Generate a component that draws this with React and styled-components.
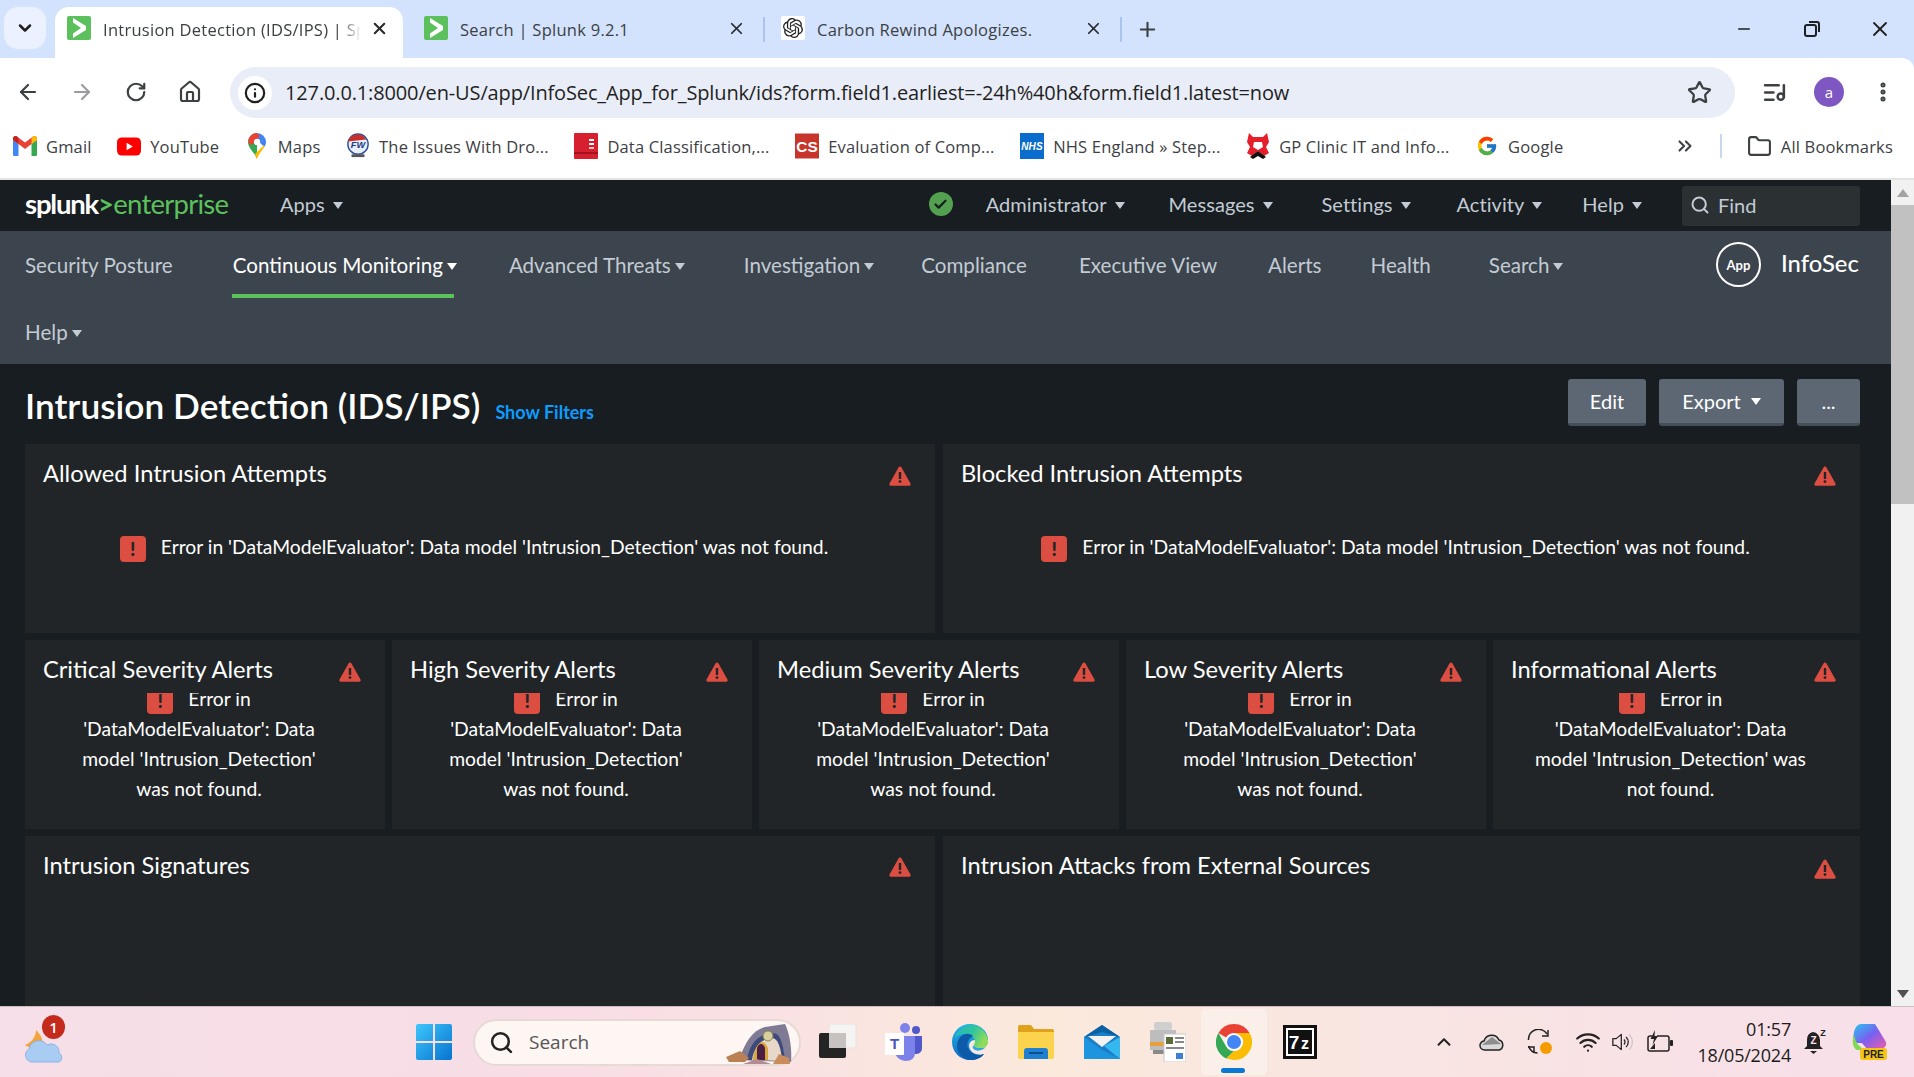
import React from 'react';
import styled, { createGlobalStyle } from 'styled-components';
import { ArrowLeft, ArrowRight, RotateCw, Home, Star, X, Plus, Minus, ChevronDown, ChevronsRight, Folder, MoreVertical, ListMusic, Search, ChevronUp, Wifi, Info, Check } from 'lucide-react';
import { SiOpenai } from 'react-icons/si';
import { FcGoogle } from 'react-icons/fc';

const Global = createGlobalStyle`
  html, body { margin: 0; padding: 0; height: 100%; background: #d3e3fd; overflow: hidden; }
  * { box-sizing: border-box; }
`;

const UI = `"Open Sans", "Noto Sans", sans-serif`;
const SP = `Lato, "Open Sans", sans-serif`;

const Page = styled.div`
  width: 1914px; height: 1077px; display: flex; flex-direction: column; overflow: hidden; background: #d3e3fd;
`;

/* ---------- browser chrome ---------- */
const TabStrip = styled.div`
  height: 58px; flex: none; background: #d3e3fd; display: flex; align-items: flex-start; padding: 7px 0 0 4px; font-family: ${UI};
`;
const TabSearch = styled.div`
  width: 42px; height: 42px; border-radius: 14px; background: #ebf1fe; display: flex; align-items: center; justify-content: center; margin-right: 9px; color: #1f1f1f;
`;
const Tab = styled.div`
  position: relative; width: 348px; height: 51px; margin-right: 9px; padding: 9px 12px 0 12px; display: flex; align-items: flex-start;
  border-radius: 14px 14px 0 0; background: ${p => (p.$active ? '#fff' : 'transparent')};
  ${p => p.$sep && `&::after { content: ''; position: absolute; right: -5px; top: 10px; width: 2px; height: 25px; background: #a9c4ef; }`}
`;
const Favicon = styled.span`
  width: 24px; height: 24px; flex: none; display: flex; align-items: center; justify-content: center; background: ${p => p.$bg}; border-radius: 2px;
`;
const TabTitle = styled.span`
  flex: 1; margin-left: 12px; font-size: 16.5px; line-height: 28px; color: #3c4043; white-space: nowrap; overflow: hidden; letter-spacing: 0.27px;
  ${p => p.$fade && `-webkit-mask-image: linear-gradient(90deg, #000 92%, transparent 100%);`}
`;
const TabClose = styled.span`
  width: 24px; height: 24px; flex: none; display: flex; align-items: center; justify-content: center; color: #26282b; margin-left: 6px;
`;
const NewTab = styled.span`
  width: 28px; height: 28px; margin: 8px 0 0 7px; display: flex; color: #3c4043; align-items: center; justify-content: center;
`;
const WinControls = styled.div`
  margin-left: auto; display: flex; padding-top: 1px; color: #1f1f1f;
`;
const WinBtn = styled.span`
  width: 68px; height: 42px; display: flex; align-items: center; justify-content: center;
`;
const Toolbar = styled.div`
  height: 60px; flex: none; background: #fff; display: flex; align-items: flex-start; padding: 9px 0 0 1px; font-family: ${UI}; border-radius: 0 12px 0 0;
`;
const NavIcon = styled.span`
  width: 54px; height: 50px; flex: none; display: flex; align-items: center; justify-content: center; color: ${p => p.$c || '#3c4043'};
`;
const Omnibox = styled.div`
  width: 1505px; height: 51px; margin-left: 13px; background: #e9edf7; border-radius: 26px; display: flex; align-items: center; padding: 0 23px 0 8px;
`;
const InfoPill = styled.span`
  width: 34px; height: 34px; border-radius: 50%; background: #fff; display: flex; align-items: center; justify-content: center; color: #1f1f1f;
`;
const Url = styled.span`
  margin-left: 13px; flex: 1; font-size: 20px; color: #1f1f1f; white-space: nowrap; letter-spacing: -0.14px;
`;
const Right = styled.div`
  display: flex; align-items: center; height: 50px; margin-left: 27px; color: #3c4043; gap: 27px;
`;
const Avatar = styled.span`
  width: 30px; height: 30px; border-radius: 50%; background: #7e57c2; color: #fff; font-size: 15px; display: flex; align-items: center; justify-content: center;
`;
const Bookmarks = styled.div`
  height: 62px; flex: none; background: #fff; border-bottom: 2px solid #e3e3e3; display: flex; align-items: center; padding: 0 0 4px 13px; font-family: ${UI}; gap: 25.6px;
`;
const Bookmark = styled.span`
  display: inline-flex; align-items: center; gap: 9px; font-size: 16.5px; color: #3c4043; white-space: nowrap; letter-spacing: 0.17px;
`;
const BmIcon = styled.span`
  width: 24px; height: 26px; flex: none; display: flex; align-items: center; justify-content: center;
`;
const BmEnd = styled.div`
  margin-left: auto; display: flex; align-items: center; padding-right: 21px; color: #3c4043;
`;
const BmSep = styled.span`
  width: 2px; height: 24px; background: #c8d8f0; margin: 0 25px 0 24px;
`;

/* ---------- splunk ---------- */
const Body = styled.div`
  flex: 1; min-height: 0; display: flex; background: #171d21;
`;
const App_ = styled.div`
  flex: 1; min-width: 0; display: flex; flex-direction: column; overflow: hidden; font-family: ${SP};
`;
const TopBar = styled.div`
  height: 51px; flex: none; display: flex; align-items: center; padding: 0 0 3px 25px; color: #c3cbd4; font-size: 20px;
`;
const Logo = styled.span`
  font-size: 27.5px; letter-spacing: -1.2px; color: #fff; font-weight: 700; width: 205px; white-space: nowrap; line-height: 30px;
  & em { font-style: normal; color: #5cc05c; font-weight: 400; letter-spacing: -0.75px; }
  & em b { font-weight: 700; }
`;
const Caret = styled.span`
  display: inline-block; width: 0; height: 0; margin-left: ${p => p.$m ?? 8}px; vertical-align: 3px;
  border-left: 5.5px solid transparent; border-right: 5.5px solid transparent; border-top: 7px solid currentColor;
`;
const TopItem = styled.span`
  margin-left: ${p => p.$ml}px; white-space: nowrap; letter-spacing: 0.05px;
`;
const StatusDot = styled.span`
  width: 24px; height: 24px; border-radius: 50%; background: #53a051; color: #171d21; display: flex; align-items: center; justify-content: center; margin-left: auto;
`;
const FindBox = styled.div`
  width: 178px; height: 40px; margin: 3px 31px 0 40px; background: #2b3033; border-radius: 3px; display: flex; align-items: center; padding: 0 0 2px 8px; gap: 8px; color: #c3cbd4;
`;
const SecBar = styled.div`
  height: 133px; flex: none; background: #3c444d; display: flex; padding-left: 25px;
`;
const SecNav = styled.div`
  width: 1660px; display: flex; flex-wrap: wrap; align-content: flex-start; font-size: 20.6px; color: #c3cbd4;
`;
const SecItem = styled.span`
  position: relative; height: 67px; line-height: 68px; margin-right: ${p => p.$mr}px; white-space: nowrap;
  color: ${p => (p.$active ? '#fff' : '#c3cbd4')};
  ${p => p.$active && `&::after { content: ''; position: absolute; left: -1px; top: 63px; width: 222px; height: 4px; background: #5cc05c; }`}
`;
const Brand = styled.div`
  display: flex; align-items: flex-start; padding-top: 11px; margin-left: 31px; color: #fff;
`;
const AppCircle = styled.span`
  width: 45px; height: 45px; border-radius: 50%; border: 2px solid #fff; display: flex; align-items: center; justify-content: center; font-size: 13px; font-weight: 700;
`;
const BrandName = styled.span`
  margin-left: 20px; font-size: 23.8px; line-height: 42px; font-weight: 500;
`;
const Header = styled.div`
  height: 80px; flex: none; display: flex; justify-content: space-between; padding: 15px 31px 0 25px;
`;
const TitleRow = styled.div`
  display: flex; align-items: baseline; gap: 15px; padding-top: 7px;
`;
const Title = styled.h1`
  margin: 0; font-size: 35.3px; line-height: 40px; color: #fff; font-weight: 600; white-space: nowrap;
`;
const ShowFilters = styled.a`
  color: #0b9cff; font-size: 18px; font-weight: 700;
`;
const Buttons = styled.div`
  display: flex; gap: 13px;
`;
const Btn = styled.span`
  width: ${p => p.$w}px; height: 47px; background: #5c6773; border-bottom: 3px solid #444e59; border-radius: 3px; color: #fff; font-size: 20px; display: flex; align-items: center; justify-content: center;
`;
const Rows = styled.div`
  flex: 1; min-height: 0; padding: 0 31px 0 25px; display: flex; flex-direction: column; gap: 7px;
`;
const Row = styled.div`
  display: grid; grid-template-columns: ${p => p.$cols}; gap: ${p => p.$gap}px; height: ${p => p.$h}px; flex: none;
`;
const Panel = styled.section`
  background: #212527; display: flex; flex-direction: column; min-width: 0; overflow: hidden;
`;
const PanelHead = styled.div`
  height: 53px; flex: none; display: flex; justify-content: space-between; padding: 15px 24px 0 18px;
`;
const PanelTitle = styled.h2`
  margin: 0; font-size: 23.7px; line-height: 28px; font-weight: 400; color: #fff; white-space: nowrap;
`;
const WarnSlot = styled.span`
  display: block; margin-top: ${p => p.$mt ?? 7}px;
`;
const ErrBody = styled.div`
  flex: 1; min-height: 0; overflow: hidden; padding: ${p => (p.$wide ? '35px 12px 0 0' : '0 53px 0 41px')}; text-align: center; font-size: 19.3px; line-height: 30px; color: #fff;
`;
const ErrText = styled.div`
  margin-top: ${p => (p.$wide ? 0 : -9)}px;
`;
const ErrIcon = styled.span`
  display: inline-flex; width: 26px; height: 26px; border-radius: 4px; background: #dc4e41; color: #212527; align-items: center; justify-content: center; vertical-align: middle; margin-right: 15px; font-weight: 900; font-size: 19px;
  line-height: 26px;
`;
const Scroll = styled.div`
  width: 23px; flex: none; background: #f1f1f1; display: flex; flex-direction: column; align-items: center; justify-content: space-between;
`;
const ScrollTop = styled.div`
  width: 100%; display: flex; flex-direction: column; align-items: center;
`;
const ArrowBox = styled.span`
  height: 25px; display: flex; align-items: center; justify-content: center;
`;
const Thumb = styled.span`
  width: 100%; height: 299px; background: #c1c1c1; display: block;
`;

/* ---------- taskbar ---------- */
const Taskbar = styled.div`
  height: 71px; flex: none; display: flex; align-items: center; border-top: 1px solid #cdbdc3; font-family: ${UI};
  background: linear-gradient(90deg, #f6dfe8 0%, #f8dde6 30%, #fbe9dc 55%, #f9e6e0 68%, #f8dfea 100%);
`;
const TaskLeft = styled.div`
  width: 401px; flex: none; padding-left: 24px; display: flex;
`;
const Weather = styled.span`
  position: relative; width: 44px; height: 44px; display: block;
`;
const WBadge = styled.span`
  position: absolute; left: 18px; top: -5px; width: 23px; height: 24px; border-radius: 50%; background: #c42b1c; color: #fff; font-size: 15px; font-weight: 600; text-align: center; line-height: 24px;
`;
const Slot = styled.span`
  position: relative; width: 66px; height: 66px; flex: none; display: flex; align-items: center; justify-content: center;
  ${p => p.$active && `background: #fbefea; border-radius: 5px; box-shadow: 2px 0 0 #f5e6e2;
    &::after { content: ''; position: absolute; bottom: 2px; left: 20px; width: 24px; height: 5px; border-radius: 3px; background: #0a78d4; }`}
`;
const SearchPill = styled.div`
  width: 328px; height: 47px; margin: 0 4px 0 6px; flex: none; border-radius: 24px; background: #fdf6f3; border: 2px solid #e6d9d6; display: flex; align-items: center; padding-left: 14px; position: relative; color: #222; font-size: 19px;
`;
const PillText = styled.span`
  margin-left: 15px; color: #555; flex: 1;
`;
const Tray = styled.div`
  margin-left: 87px; display: flex; align-items: center; color: #222;
`;
const TrayIcon = styled.span`
  width: ${p => p.$w || 48}px; display: flex; justify-content: center; flex: none;
`;
const Clock = styled.div`
  width: 105px; flex: none; text-align: right; font-size: 18px; line-height: 26px; color: #1c1c1c; letter-spacing: -0.2px; white-space: nowrap;
`;

/* ---------- icons ---------- */
const SplunkFav = () => (
  <Favicon $bg="#5cc05c">
    <svg width="14" height="20" viewBox="0 0 14 20"><path d="M1 0v4.4L9 10l-8 5.6V20l13-8V8z" fill="#fff" /></svg>
  </Favicon>
);
const WarnIcon = () => (
  <svg width="22" height="20" viewBox="0 0 22 20" style={{ display: 'block' }}>
    <path d="M11 .5c.7 0 1.2.4 1.5 1l9 16c.6 1.1-.1 2.2-1.3 2.2H1.8C.6 19.700-.1 18.600.5 17.500l9-16c.3-.6.8-1 1.500-1z" fill="#dc4e41" />
    <rect x="9.800" y="6" width="2.400" height="7" fill="#212527" />
    <circle cx="11" cy="15.600" r="1.400" fill="#212527" />
  </svg>
);
const Gmail = () => (
  <svg width="24" height="20" viewBox="0 0 24 20">
    <path d="M0 4v14.400C0 19.300.7 20 1.600 20h3.900V8z" fill="#4285f4" />
    <path d="M24 4v14.400c0 .9-.7 1.600-1.600 1.600h-3.900V8z" fill="#34a853" />
    <path d="M0 2.500C0 .5 2.300-.7 3.900.5L12 6.600 20.100.5C21.700-.7 24 .5 24 2.500V4l-5.500 4L12 12.900 5.500 8 0 4z" fill="#ea4335" />
    <path d="M18.500 2.400 20.100.5C21.700-.7 24 .5 24 2.500V4l-5.500 4z" fill="#fbbc04" />
    <path d="M0 2.500C0 .5 2.300-.7 3.900.5L5.500 2v6L0 4z" fill="#c5221f" />
  </svg>
);
const YouTube = () => (
  <svg width="25" height="19" viewBox="0 0 25 19"><rect width="25" height="19" rx="5" fill="#f00" /><path d="M10 5.500v8l6.500-4z" fill="#fff" /></svg>
);
const Maps = () => (
  <svg width="18" height="26" viewBox="0 0 18 26">
    <path d="M9 26C7 20 0 15 0 9a9 9 0 0 1 9-9z" fill="#34a853" />
    <path d="M9 0a9 9 0 0 1 9 9c0 2-.7 3.500-1.700 5L5 3z" fill="#4285f4" />
    <path d="M2.500 3A9 9 0 0 1 9 0l3 3-8 9L1 11c-1-3-.5-6 1.500-8z" fill="#ea4335" />
    <path d="M16.300 14C14 17.500 10.500 21 9 26l-2-5 9-9z" fill="#fbbc04" />
    <circle cx="9" cy="9" r="3.200" fill="#fff" />
  </svg>
);
const FW = () => (
  <svg width="26" height="26" viewBox="0 0 26 26">
    <circle cx="13" cy="11" r="11" fill="#e8eef8" stroke="#2a4d9b" strokeWidth="1.500" />
    <path d="M2 8a11 11 0 0 1 20-2z" fill="#c9302c" />
    <text x="13" y="15" fontSize="10" fontWeight="700" fontStyle="italic" textAnchor="middle" fill="#1c3a86" fontFamily="Liberation Sans">FW</text>
    <rect x="6" y="22" width="14" height="3" fill="#555" />
  </svg>
);
const DataCls = () => (
  <svg width="24" height="26" viewBox="0 0 24 26"><rect width="24" height="26" rx="1" fill="#d6202f" /><rect y="19" width="24" height="2" fill="#a3131f" /><rect x="15" y="6" width="5" height="2" fill="#fff" /><rect x="15" y="10" width="5" height="2" fill="#fff" /><rect x="15" y="14" width="5" height="2" fill="#f6c5c9" /></svg>
);
const CS = () => (
  <svg width="25" height="26" viewBox="0 0 25 26"><rect width="25" height="26" fill="#c7352b" /><text x="12.500" y="19" fontSize="16" fontWeight="700" textAnchor="middle" fill="#fff" fontFamily="Liberation Sans">CS</text></svg>
);
const NHS = () => (
  <svg width="24" height="26" viewBox="0 0 24 26"><rect width="24" height="26" fill="#0a6ccc" /><text x="12" y="17" fontSize="10" fontStyle="italic" fontWeight="700" textAnchor="middle" fill="#fff" fontFamily="Liberation Sans">NHS</text></svg>
);
const GP = () => (
  <svg width="24" height="26" viewBox="0 0 24 26">
    <path d="M3 0l4 4h10l4-4 2 9-3 5 3 6-5 3-6-5-6 5-5-3 3-6-3-5z" fill="#e5202a" />
    <path d="M8 9h8l1 5-5 3-5-3z" fill="#fff" />
    <path d="M4 24l8-6 8 6-3 2-5-3-5 3z" fill="#111" />
  </svg>
);
const Windows = () => (
  <svg width="36" height="36" viewBox="0 0 36 36">
    <defs><linearGradient id="w" x1="0" y1="0" x2="1" y2="1"><stop offset="0" stopColor="#3fc6fb" /><stop offset="1" stopColor="#0673cf" /></linearGradient></defs>
    <path d="M2 0h15v17H0V2a2 2 0 0 1 2-2zM19 0h15a2 2 0 0 1 2 2v15H19zM0 19h17v17H2a2 2 0 0 1-2-2zM19 19h17v15a2 2 0 0 1-2 2H19z" fill="url(#w)" />
  </svg>
);
const Cave = () => (
  <svg width="68" height="40" viewBox="0 0 68 40" style={{ position: 'absolute', right: 6, top: 3 }}>
    <path d="M14 36C20 18 28 6 40 3l20-3c5 10 7 26 6 38z" fill="#7f7b95" />
    <path d="M22 36c2-16 12-27 26-27 7 0 10 10 12 28z" fill="#3d4a7a" />
    <path d="M27 36c2-13 10-22 20-22 6 0 9 10 10 23z" fill="#e8d8c9" />
    <path d="M28 36c1-9 4-17 9-18 3 0 5 3 6 7v11z" fill="#d9a83c" />
    <path d="M32 36V25c0-3 2-5 4-5s4 2 4 5v11z" fill="#4b1f45" />
    <circle cx="43" cy="12" r="5" fill="#d8cf9f" stroke="#8b8450" />
    <path d="M1 33l14-6 9 7-4 4H4z" fill="#bb8052" />
    <path d="M18 40l14-5 14 5z" fill="#b58a93" />
    <path d="M48 40l6-10 10 4 1 6z" fill="#c98c5a" />
  </svg>
);
const TaskView = () => (
  <svg width="38" height="36" viewBox="0 0 38 36">
    <rect x="10" y="0" width="27" height="24" rx="2" fill="#f6f4f3" stroke="#e6e2df" />
    <rect x="0" y="9" width="27" height="25" rx="2" fill="#242424" />
    <rect x="10" y="9" width="17" height="15" fill="#c6c2c0" />
  </svg>
);
const Teams = () => (
  <svg width="38" height="40" viewBox="0 0 38 40">
    <circle cx="20" cy="6" r="5" fill="#7b83eb" /><circle cx="31" cy="8" r="4" fill="#5059c9" />
    <path d="M26 14h11v12c0 5-4 6-7 6z" fill="#5059c9" />
    <path d="M10 14h20v17c0 5-4 8-9 8s-11-4-11-9z" fill="#7b83eb" />
    <rect x="0" y="11" width="19" height="22" rx="1" fill="#fff" />
    <text x="9.500" y="27" fontSize="15" fontWeight="700" textAnchor="middle" fill="#4b53bc" fontFamily="Liberation Sans">T</text>
  </svg>
);
const Edge = () => (
  <svg width="36" height="36" viewBox="0 0 36 36">
    <defs>
      <linearGradient id="e1" x1="0" y1="0" x2="0" y2="1"><stop offset="0" stopColor="#24b6e8" /><stop offset="1" stopColor="#0a6cc2" /></linearGradient>
      <linearGradient id="e2" x1="0" y1="0" x2="1" y2="0.4"><stop offset="0" stopColor="#1fb5c9" /><stop offset="0.6" stopColor="#34c59a" /><stop offset="1" stopColor="#8ddc5a" /></linearGradient>
    </defs>
    <path d="M18 0C8 0 0 8 0 18s8 18 18 18c6 0 11-2 14-6-5 2-14 0-15-8 0-3 2-6 6-6h13c0-9-8-16-18-16z" fill="url(#e1)" />
    <path d="M8 6C12 2 18 0 22 1c8 2 14 9 14 17 0 4-3 6-8 6-3 0-6-1-7-2 1-1 2-3 2-5 0-4-6-7-11-7-4 0-7 1-10 4 1-3 3-6 6-8z" fill="url(#e2)" />
    <path d="M17 10c-6-1-12 4-12 12 0 7 6 13 13 14 6 0 11-2 14-6-5 2-13 1-16-6-2-5 1-10 5-12-1-1-2-2-4-2z" fill="#0d5ba8" />
    <path d="M21 22c3 2 9 3 13 1-2 2-7 5-11 3-2-1-3-3-2-4z" fill="#2aa7e4" />
  </svg>
);
const Files = () => (
  <svg width="36" height="34" viewBox="0 0 36 34">
    <path d="M0 2a2 2 0 0 1 2-2h11l3 4h18a2 2 0 0 1 2 2v3H0z" fill="#e0a21b" />
    <path d="M0 7h36v25a2 2 0 0 1-2 2H2a2 2 0 0 1-2-2z" fill="#fcd34d" />
    <path d="M6 26a3 3 0 0 1 3-3h18a3 3 0 0 1 3 3v8H6z" fill="#1f7fd0" />
    <rect x="11" y="27" width="14" height="2" fill="#0b4f8c" />
  </svg>
);
const Mail = () => (
  <svg width="36" height="34" viewBox="0 0 36 34">
    <path d="M18 0 36 12v22H0V12z" fill="#1a7dc7" />
    <path d="M18 0 36 12 18 7 0 12z" fill="#0b5fa3" />
    <path d="M4 11h28L18 22z" fill="#f2f2f2" />
    <path d="M36 12v22L20 21z" fill="#35b8f0" />
    <path d="M0 12l18 13 18 9H0z" fill="#1c94de" />
  </svg>
);
const Scanner = () => (
  <svg width="36" height="40" viewBox="0 0 36 40">
    <rect x="4" y="0" width="18" height="8" rx="2" fill="#cfcfcf" />
    <rect x="0" y="8" width="26" height="20" fill="#bdbdbd" />
    <rect x="0" y="20" width="14" height="4" fill="#e8a03c" />
    <rect x="3" y="28" width="20" height="4" fill="#8a8a8a" />
    <rect x="14" y="12" width="22" height="28" fill="#fff" stroke="#c8c8c8" />
    <rect x="16" y="15" width="7" height="7" fill="#5c6b3a" /><rect x="25" y="15" width="9" height="2" fill="#888" /><rect x="25" y="19" width="9" height="2" fill="#888" />
    <rect x="16" y="25" width="18" height="2" fill="#888" /><rect x="26" y="31" width="7" height="6" fill="#3d7fd0" />
  </svg>
);
const Chrome = () => (
  <svg width="36" height="36" viewBox="0 0 36 36">
    <path d="M18 0a18 18 0 0 1 15.600 9H18a9 9 0 0 0-7.800 4.500L2.400 9A18 18 0 0 1 18 0z" fill="#ea4335" />
    <path d="M2.400 9l7.800 13.500A9 9 0 0 0 18 27l-7.800 7.500A18 18 0 0 1 2.400 9z" fill="#34a853" />
    <path d="M33.600 9A18 18 0 0 1 18 36l-7.800-1.500L18 27a9 9 0 0 0 7.800-13.500L18 9z" fill="#fbbc04" />
    <circle cx="18" cy="18" r="8.800" fill="#fff" /><circle cx="18" cy="18" r="7" fill="#4285f4" />
  </svg>
);
const SevenZ = () => (
  <svg width="34" height="34" viewBox="0 0 34 34">
    <rect width="34" height="34" fill="#111" /><rect x="3" y="3" width="28" height="28" fill="#fff" /><rect x="5" y="5" width="24" height="24" fill="#111" />
    <text x="11" y="24" fontSize="19" fontWeight="700" textAnchor="middle" fill="#fff" fontFamily="Liberation Sans">7</text>
    <text x="22" y="24" fontSize="16" fontWeight="700" textAnchor="middle" fill="#fff" fontFamily="Liberation Sans">z</text>
  </svg>
);
const WeatherArt = () => (
  <svg width="44" height="44" viewBox="0 0 44 44" style={{ display: 'block' }}>
    <path d="M1 25c6-2 11-8 11-15 3 3 8 9 6 14-2 4-12 5-17 1z" fill="#f2a33a" />
    <path d="M8 42a7 7 0 0 1-3-13 10 10 0 0 1 18-4 8 8 0 0 1 12 8 5 5 0 0 1 0 9z" fill="#a9cdf2" stroke="#8db4e8" />
  </svg>
);
const CloudTray = () => (
  <svg width="26" height="18" viewBox="0 0 26 18"><path d="M6 17a4.500 4.500 0 0 1-1-9 8 8 0 0 1 15-1 5.200 5.200 0 0 1 0 10z" fill="#d9d9d9" stroke="#222" strokeWidth="1.500" /><path d="M3 12 13 4l9 7z" fill="#8d8d8d" /></svg>
);
const SyncTray = () => (
  <svg width="26" height="26" viewBox="0 0 26 26">
    <path d="M1.500 11A10 10 0 0 1 20 5" fill="none" stroke="#222" strokeWidth="1.500" /><path d="M21 1v6h-6" fill="none" stroke="#222" strokeWidth="1.500" />
    <path d="M1.500 17a10 10 0 0 0 9 7" fill="none" stroke="#222" strokeWidth="1.500" /><path d="M1 18h6v6" fill="none" stroke="#222" strokeWidth="1.500" />
    <circle cx="19" cy="19" r="6" fill="#f59b00" />
  </svg>
);
const VolumeTray = () => (
  <svg width="26" height="22" viewBox="0 0 26 22" fill="none">
    <path d="M1 7h4l6-5v18l-6-5H1z" stroke="#222" strokeWidth="1.500" strokeLinejoin="round" />
    <path d="M14 8a4 4 0 0 1 0 6M16.500 5a8 8 0 0 1 0 12" stroke="#222" strokeWidth="1.500" />
    <path d="M20 2a12 12 0 0 1 0 18" stroke="#cfc4ca" strokeWidth="1.500" />
  </svg>
);
const BatteryTray = () => (
  <svg width="26" height="24" viewBox="0 0 26 24" fill="none">
    <path d="M5 6H3a2 2 0 0 0-2 2v11a2 2 0 0 0 2 2h17a2 2 0 0 0 2-2V8a2 2 0 0 0-2-2H10" stroke="#222" strokeWidth="1.500" />
    <rect x="23" y="10" width="3" height="6" rx="1" fill="#222" />
    <path d="M8 0 3.500 9H7l-1.500 6L11 6H7.500z" fill="#222" />
    <path d="M3 19l5-6v6z" fill="#222" />
  </svg>
);
const Bell = () => (
  <svg width="24" height="28" viewBox="0 0 24 28">
    <path d="M10 4a8 8 0 0 0-6 8v6l-3 3h19l-3-3v-6a8 8 0 0 0-7-8z" fill="#222" /><path d="M7 23h7l-3.500 3z" fill="#222" />
    <text x="10.500" y="16" fontSize="10" fontWeight="700" textAnchor="middle" fill="#f8dfea" fontFamily="Liberation Sans">Z</text>
    <text x="20" y="8" fontSize="9" fontWeight="700" textAnchor="middle" fill="#222" fontFamily="Liberation Sans">Z</text>
  </svg>
);
const Copilot = () => (
  <svg width="35" height="36" viewBox="0 0 35 36">
    <defs><linearGradient id="c" x1="0" y1="0" x2="1" y2="1"><stop offset="0" stopColor="#27c5f0" /><stop offset="0.5" stopColor="#7b5ff0" /><stop offset="1" stopColor="#ef5ea8" /></linearGradient></defs>
    <path d="M9 0h14l11 18c1 4-2 7-6 7H15l-5-6H2C0 10 3 0 9 0z" fill="url(#c)" />
    <path d="M2 10c1 8 5 13 11 16H5C0 24 0 15 2 10z" fill="#7ed957" />
    <rect x="8" y="24" width="27" height="12" rx="3" fill="#f5c518" />
    <text x="21.500" y="34" fontSize="10" fontWeight="800" textAnchor="middle" fill="#222" fontFamily="Liberation Sans">PRE</text>
  </svg>
);

/* ---------- data ---------- */
const bookmarks = [
  [<Gmail />, 'Gmail'], [<YouTube />, 'YouTube'], [<Maps />, 'Maps'], [<FW />, 'The Issues With Dro...'],
  [<DataCls />, 'Data Classification,...'], [<CS />, 'Evaluation of Comp...'], [<NHS />, 'NHS England » Step...'],
  [<GP />, 'GP Clinic IT and Info...'], [<FcGoogle size={22} />, 'Google'],
];
const ERR = "Error in 'DataModelEvaluator': Data model 'Intrusion_Detection' was not found.";

const ErrorMsg = ({ wide }) => (
  <ErrBody $wide={wide}>
    <ErrText $wide={wide}><ErrIcon>!</ErrIcon>{ERR}</ErrText>
  </ErrBody>
);
const AlertPanel = ({ title, wide, mt, empty }) => (
  <Panel>
    <PanelHead>
      <PanelTitle>{title}</PanelTitle>
      <WarnSlot $mt={mt}><WarnIcon /></WarnSlot>
    </PanelHead>
    {!empty && <ErrorMsg wide={wide} />}
  </Panel>
);

export default function App() {
  return (
    <Page>
      <Global />
      <TabStrip>
        <TabSearch><ChevronDown size={20} strokeWidth={3} /></TabSearch>
        <Tab $active>
          <SplunkFav />
          <TabTitle $fade>Intrusion Detection (IDS/IPS) | Splunk 9.2.1</TabTitle>
          <TabClose><X size={19} strokeWidth={2.6} /></TabClose>
        </Tab>
        <Tab $sep>
          <SplunkFav />
          <TabTitle>Search | Splunk 9.2.1</TabTitle>
          <TabClose><X size={19} strokeWidth={2.2} /></TabClose>
        </Tab>
        <Tab $sep>
          <Favicon $bg="#fff"><SiOpenai size={20} color="#222" /></Favicon>
          <TabTitle>Carbon Rewind Apologizes.</TabTitle>
          <TabClose><X size={19} strokeWidth={2.2} /></TabClose>
        </Tab>
        <NewTab><Plus size={23} strokeWidth={2.2} /></NewTab>
        <WinControls>
          <WinBtn><Minus size={18} strokeWidth={2} /></WinBtn>
          <WinBtn>
            <svg width="18" height="18" viewBox="0 0 18 18" fill="none" stroke="#1f1f1f" strokeWidth="2"><rect x="2" y="5" width="11" height="11" rx="2" /><path d="M6 2h8a2 2 0 0 1 2 2v8" /></svg>
          </WinBtn>
          <WinBtn><X size={24} strokeWidth={1.8} /></WinBtn>
        </WinControls>
      </TabStrip>

      <Toolbar>
        <NavIcon><ArrowLeft size={24} strokeWidth={2.2} /></NavIcon>
        <NavIcon $c="#9a9c9f"><ArrowRight size={24} strokeWidth={2.2} /></NavIcon>
        <NavIcon><RotateCw size={22} strokeWidth={2.4} /></NavIcon>
        <NavIcon><Home size={24} strokeWidth={2.2} /></NavIcon>
        <Omnibox>
          <InfoPill><Info size={22} strokeWidth={2.4} /></InfoPill>
          <Url>127.0.0.1:8000/en-US/app/InfoSec_App_for_Splunk/ids?form.field1.earliest=-24h%40h&amp;form.field1.latest=now</Url>
          <Star size={25} strokeWidth={2.2} color="#3c4043" />
        </Omnibox>
        <Right>
          <ListMusic size={25} strokeWidth={2.4} />
          <Avatar>a</Avatar>
          <MoreVertical size={24} strokeWidth={3} />
        </Right>
      </Toolbar>

      <Bookmarks>
        {bookmarks.map(([icon, label]) => (
          <Bookmark key={label}><BmIcon>{icon}</BmIcon>{label}</Bookmark>
        ))}
        <BmEnd>
          <ChevronsRight size={22} strokeWidth={2.2} />
          <BmSep />
          <Bookmark><Folder size={25} strokeWidth={2} />All Bookmarks</Bookmark>
        </BmEnd>
      </Bookmarks>

      <Body>
        <App_>
          <TopBar>
            <Logo>splunk<em><b>&gt;</b>enterprise</em></Logo>
            <TopItem $ml={50}>Apps<Caret /></TopItem>
            <StatusDot><Check size={15} strokeWidth={3.5} /></StatusDot>
            <TopItem $ml={33}>Administrator<Caret /></TopItem>
            <TopItem $ml={44}>Messages<Caret /></TopItem>
            <TopItem $ml={49}>Settings<Caret /></TopItem>
            <TopItem $ml={46}>Activity<Caret /></TopItem>
            <TopItem $ml={40}>Help<Caret /></TopItem>
            <FindBox><Search size={20} strokeWidth={2.4} />Find</FindBox>
          </TopBar>
          <SecBar>
            <SecNav>
              <SecItem $mr={60}>Security Posture</SecItem>
              <SecItem $mr={52} $active>Continuous Monitoring<Caret $m={4} /></SecItem>
              <SecItem $mr={59}>Advanced Threats<Caret $m={4} /></SecItem>
              <SecItem $mr={47}>Investigation<Caret $m={4} /></SecItem>
              <SecItem $mr={52}>Compliance</SecItem>
              <SecItem $mr={51}>Executive View</SecItem>
              <SecItem $mr={49}>Alerts</SecItem>
              <SecItem $mr={58}>Health</SecItem>
              <SecItem $mr={100}>Search<Caret $m={4} /></SecItem>
              <SecItem $mr={0}>Help<Caret $m={4} /></SecItem>
            </SecNav>
            <Brand><AppCircle>App</AppCircle><BrandName>InfoSec</BrandName></Brand>
          </SecBar>
          <Header>
            <TitleRow>
              <Title>Intrusion Detection (IDS/IPS)</Title>
              <ShowFilters>Show Filters</ShowFilters>
            </TitleRow>
            <Buttons>
              <Btn $w={78}>Edit</Btn>
              <Btn $w={125}>Export<Caret $m={10} /></Btn>
              <Btn $w={63}>...</Btn>
            </Buttons>
          </Header>
          <Rows>
            <Row $cols="910px 917px" $gap={8} $h={189}>
              <AlertPanel title="Allowed Intrusion Attempts" wide />
              <AlertPanel title="Blocked Intrusion Attempts" wide />
            </Row>
            <Row $cols="repeat(4, 360px) 367px" $gap={7} $h={189}>
              <AlertPanel title="Critical Severity Alerts" />
              <AlertPanel title="High Severity Alerts" />
              <AlertPanel title="Medium Severity Alerts" />
              <AlertPanel title="Low Severity Alerts" />
              <AlertPanel title="Informational Alerts" />
            </Row>
            <Row $cols="910px 917px" $gap={8} $h={400}>
              <AlertPanel title="Intrusion Signatures" empty mt={6} />
              <AlertPanel title="Intrusion Attacks from External Sources" empty mt={8} />
            </Row>
          </Rows>
        </App_>
        <Scroll>
          <ScrollTop>
            <ArrowBox><svg width="12" height="8" viewBox="0 0 12 8"><path d="M6 0l6 8H0z" fill="#a3a3a3" /></svg></ArrowBox>
            <Thumb />
          </ScrollTop>
          <ArrowBox><svg width="12" height="8" viewBox="0 0 12 8"><path d="M6 8l6-8H0z" fill="#505050" /></svg></ArrowBox>
        </Scroll>
      </Body>

      <Taskbar>
        <TaskLeft><Weather><WeatherArt /><WBadge>1</WBadge></Weather></TaskLeft>
        <Slot><Windows /></Slot>
        <SearchPill><Search size={25} strokeWidth={2.4} /><PillText>Search</PillText><Cave /></SearchPill>
        <Slot><TaskView /></Slot>
        <Slot><Teams /></Slot>
        <Slot><Edge /></Slot>
        <Slot><Files /></Slot>
        <Slot><Mail /></Slot>
        <Slot><Scanner /></Slot>
        <Slot $active><Chrome /></Slot>
        <Slot><SevenZ /></Slot>
        <Tray>
          <TrayIcon><ChevronUp size={22} strokeWidth={2.2} /></TrayIcon>
          <TrayIcon><CloudTray /></TrayIcon>
          <TrayIcon><SyncTray /></TrayIcon>
          <TrayIcon><Wifi size={26} strokeWidth={2} /></TrayIcon>
          <TrayIcon $w={22}><VolumeTray /></TrayIcon>
          <TrayIcon $w={52}><BatteryTray /></TrayIcon>
          <Clock>01:57<br />18/05/2024</Clock>
          <TrayIcon><Bell /></TrayIcon>
          <TrayIcon $w={60}><Copilot /></TrayIcon>
        </Tray>
      </Taskbar>
    </Page>
  );
}
